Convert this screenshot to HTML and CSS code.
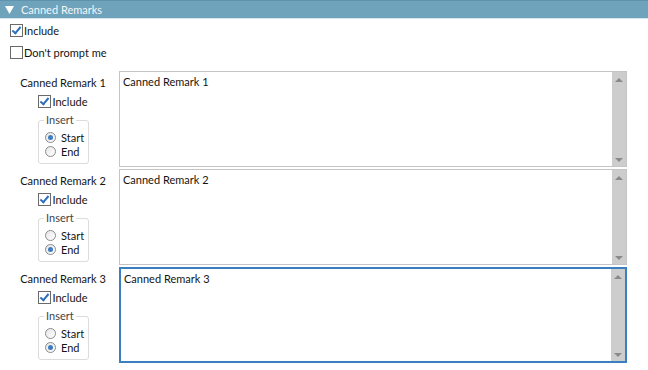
FILE: index.html
```html
<!doctype html>
<html lang="en">
<head>
  <title>Canned Remarks</title>
  <meta charset="utf-8">
  <link rel="stylesheet" href="styles.css">
</head>
<body>

<div class="sectionHeader">
  <svg class="sectionArrow" width="9" height="8" viewBox="0 0 9 8"><path d="M0 0 H9 L4.5 8 Z" fill="#ffffff"/></svg>
  <span>Canned Remarks</span>
</div>

<div class="options">
  <div class="checkRow"><span class="checkBox checked"></span>Include</div>
  <div class="checkRow"><span class="checkBox"></span>Don't prompt me</div>
</div>

<div class="remarkList">
  <div class="remarkRow">
    <div class="remarkSide">
      <div class="remarkLabel">Canned Remark 1</div>
      <div class="checkRow small"><span class="checkBox checked"></span>Include</div>
      <fieldset class="insertGroup">
        <legend>Insert</legend>
        <div class="radioRow"><span class="radio checked"></span>Start</div>
        <div class="radioRow"><span class="radio"></span>End</div>
      </fieldset>
    </div>
    <div class="remarkText">
      <div class="remarkValue">Canned Remark 1</div>
      <div class="scrollBar"><span class="arrowUp"></span><span class="arrowDown"></span></div>
    </div>
  </div>

  <div class="remarkRow">
    <div class="remarkSide">
      <div class="remarkLabel">Canned Remark 2</div>
      <div class="checkRow small"><span class="checkBox checked"></span>Include</div>
      <fieldset class="insertGroup">
        <legend>Insert</legend>
        <div class="radioRow"><span class="radio"></span>Start</div>
        <div class="radioRow"><span class="radio checked"></span>End</div>
      </fieldset>
    </div>
    <div class="remarkText">
      <div class="remarkValue">Canned Remark 2</div>
      <div class="scrollBar"><span class="arrowUp"></span><span class="arrowDown"></span></div>
    </div>
  </div>

  <div class="remarkRow">
    <div class="remarkSide">
      <div class="remarkLabel">Canned Remark 3</div>
      <div class="checkRow small"><span class="checkBox checked"></span>Include</div>
      <fieldset class="insertGroup">
        <legend>Insert</legend>
        <div class="radioRow"><span class="radio"></span>Start</div>
        <div class="radioRow"><span class="radio checked"></span>End</div>
      </fieldset>
    </div>
    <div class="remarkText focused">
      <div class="remarkValue">Canned Remark 3</div>
      <div class="scrollBar"><span class="arrowUp"></span><span class="arrowDown"></span></div>
    </div>
  </div>
</div>

</body>
</html>
```

FILE: styles.css
```css
body {
  margin: 0;
  font-family: Lato, "Noto Sans", sans-serif;
  font-size: 11px;
  color: #141414;
  background-color: #ffffff;
}

.sectionHeader {
  height: 19px;
  display: flex;
  align-items: center;
  padding-left: 5px;
  background-color: #6fa2bb;
  border-top: 1px solid #5f93ad;
  border-bottom: 1px solid #d5e5ee;
  color: #f2f7fa;
  box-sizing: border-box;
}

.sectionArrow {
  margin-right: 7px;
}

.options {
  padding: 0 0 0 10px;
}

.checkRow {
  height: 22px;
  display: flex;
  align-items: center;
}

.checkBox {
  width: 11px;
  height: 11px;
  border: 1px solid #6a6a6a;
  background-color: #ffffff;
  margin-right: 1px;
  display: inline-block;
  position: relative;
}

.checkBox.checked::after {
  content: "";
  position: absolute;
  left: 3px;
  top: 0;
  width: 3px;
  height: 7px;
  border-right: 2px solid #2e6fbd;
  border-bottom: 2px solid #2e6fbd;
  transform: rotate(40deg);
}

.remarkList {
  margin-top: 8px;
}

.remarkRow {
  display: flex;
  height: 96px;
  margin-bottom: 2px;
}

.remarkSide {
  width: 110px;
  padding-left: 8px;
  display: flex;
  flex-direction: column;
  align-items: center;
}

.remarkLabel {
  margin-top: 4px;
  height: 16px;
  line-height: 16px;
}

.checkRow.small {
  height: 17px;
  margin-top: 2px;
  margin-bottom: 4px;
}

.insertGroup {
  margin: 0 0 0 1px;
  padding: 4px 0 5px 6px;
  width: 51px;
  box-sizing: border-box;
  border: 1px solid #dcdcdc;
  border-radius: 3px;
}

.insertGroup legend {
  padding: 0 2px;
  color: #444444;
  line-height: 12px;
  margin-left: -1px;
}

.radioRow {
  display: flex;
  align-items: center;
  height: 14px;
}

.radio {
  width: 9px;
  height: 9px;
  border: 1px solid #8a8a8a;
  border-radius: 50%;
  background: linear-gradient(135deg, #e6e6e6, #ffffff);
  margin-right: 5px;
  position: relative;
}

.radio.checked::after {
  content: "";
  position: absolute;
  left: 2px;
  top: 2px;
  width: 5px;
  height: 5px;
  border-radius: 50%;
  background-color: #3d7cc2;
}

.remarkText {
  flex: 1;
  margin-left: 1px;
  margin-right: 21px;
  border: 1px solid #c4c4c4;
  display: flex;
  box-sizing: border-box;
}

.remarkText.focused {
  border: 2px solid #3c7fc1;
}

.remarkValue {
  flex: 1;
  padding: 2px 3px;
  line-height: 16px;
}

.scrollBar {
  width: 14px;
  background-color: #cdcdcd;
  display: flex;
  flex-direction: column;
  justify-content: space-between;
  align-items: center;
  padding: 6px 0 4px;
}

.arrowUp {
  width: 0;
  height: 0;
  border-left: 4px solid transparent;
  border-right: 4px solid transparent;
  border-bottom: 4px solid #8a8a8a;
}

.arrowDown {
  width: 0;
  height: 0;
  border-left: 4px solid transparent;
  border-right: 4px solid transparent;
  border-top: 4px solid #8a8a8a;
}
```
